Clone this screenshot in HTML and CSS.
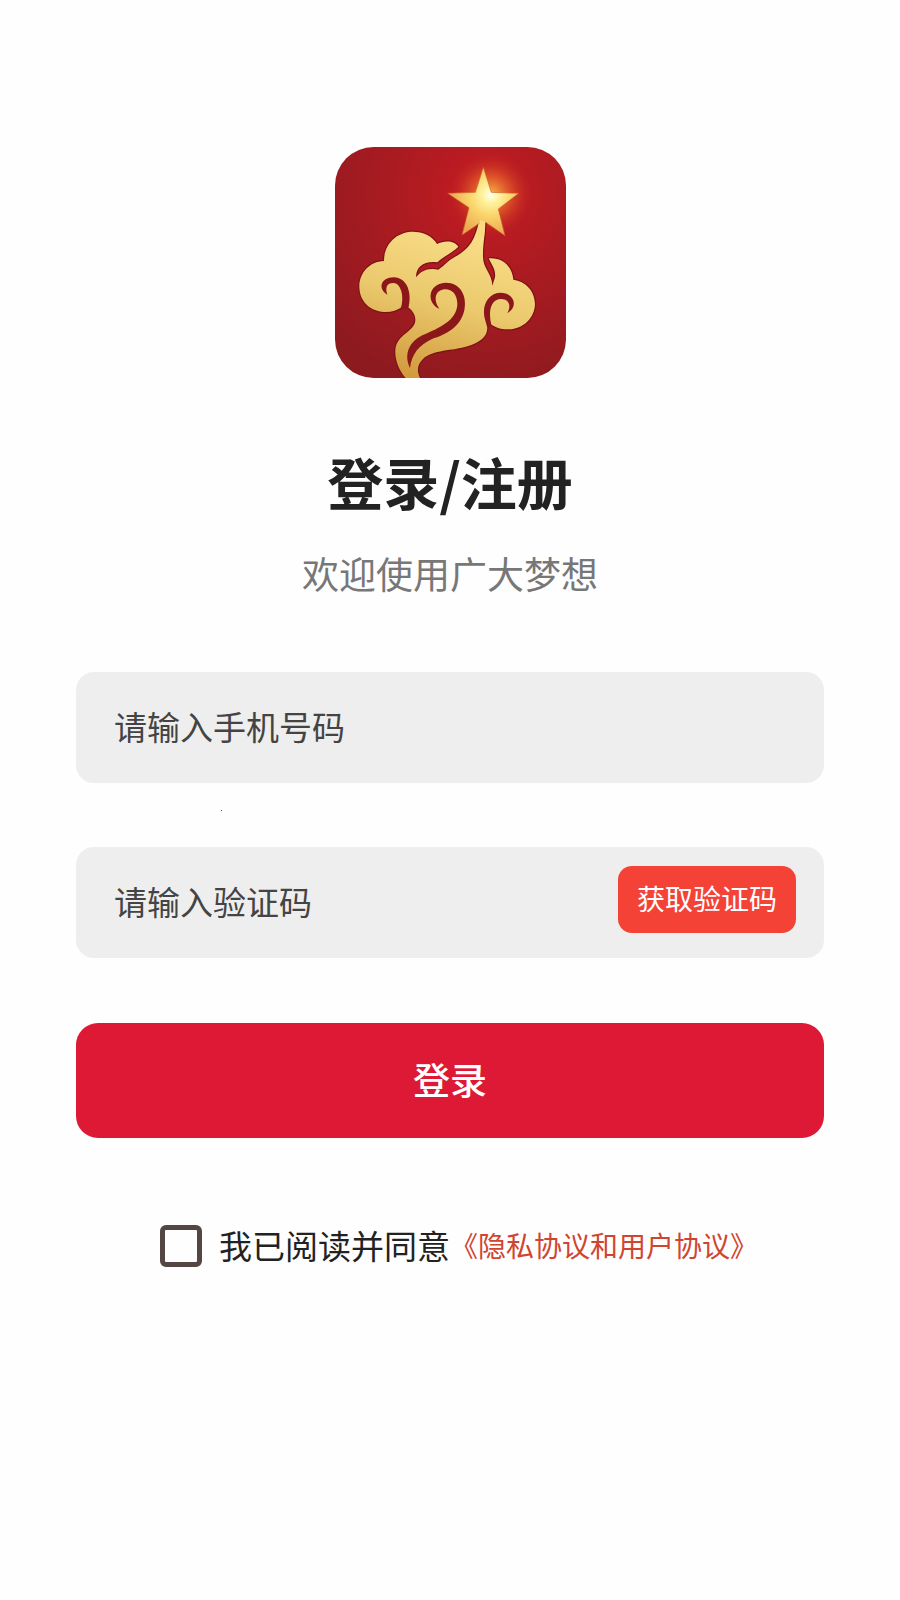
FILE: index.html
```html
<!DOCTYPE html>
<html lang="zh-CN">
<head>
    <meta charset="UTF-8">
    <meta name="viewport" content="width=device-width, initial-scale=1.0">
    <title>登录/注册</title>
    <link rel="stylesheet" href="styles.css">
</head>
<body>
    <main class="login">
        <svg class="logo" viewBox="27 29 693 693" role="img" aria-label="广大梦想">
            <defs>
                <radialGradient id="bg" cx="0.65" cy="0.2" r="0.9">
                    <stop offset="0" stop-color="#c41c22"/>
                    <stop offset="0.45" stop-color="#aa1b21"/>
                    <stop offset="1" stop-color="#8c1a1f"/>
                </radialGradient>
                <linearGradient id="gold" x1="0.6" y1="0" x2="0.3" y2="1">
                    <stop offset="0" stop-color="#fbe08c"/>
                    <stop offset="0.5" stop-color="#ebc96d"/>
                    <stop offset="1" stop-color="#d0993c"/>
                </linearGradient>
                <radialGradient id="star" gradientUnits="userSpaceOnUse" cx="494" cy="172" r="125">
                    <stop offset="0" stop-color="#fffff0"/>
                    <stop offset="0.2" stop-color="#fff3a0"/>
                    <stop offset="0.5" stop-color="#fbd56c"/>
                    <stop offset="1" stop-color="#eba750"/>
                </radialGradient>
                <radialGradient id="glow">
                    <stop offset="0" stop-color="#ffc64c" stop-opacity="0.95"/>
                    <stop offset="0.45" stop-color="#f27a2c" stop-opacity="0.55"/>
                    <stop offset="1" stop-color="#c8201f" stop-opacity="0"/>
                </radialGradient>
                <clipPath id="tile">
                    <rect x="27" y="29" width="693" height="693" rx="116"/>
                </clipPath>
            </defs>
            <g clip-path="url(#tile)">
                <rect x="27" y="29" width="693" height="693" fill="url(#bg)"/>
                <circle cx="494" cy="172" r="128" fill="url(#glow)"/>
                <!-- cloud -->
                <path fill="url(#gold)" stroke="#7d1216" stroke-width="7" paint-order="stroke" stroke-linejoin="round" d="M459 252
                    C448 306 431 334 390 357 C365 370 356 385 337 397 C305 391 286 400 270 420
                    C270 386 296 370 334 375 C352 358 377 347 397 328 C386 309 355 308 333 320
                    C320 296 290 282 255 283 C208 287 174 322 174 371 C130 372 99 408 100 450
                    C101 492 132 522 174 524 C195 525 214 519 228 509 L248 511 C260 520 269 533 268 550
                    C265 584 212 590 208 637 C206 672 222 704 244 728 L285 728
                    C270 700 274 682 291 665 C320 637 380 641 425 627 C462 615 484 600 484 570
                    L490 557 C505 570 526 577 548 576 C592 575 626 542 627 500
                    C626 459 598 432 562 427 C558 386 530 360 488 363
                    C496 382 510 395 507 420 L499 445 C498 405 468 395 471 350 C471 315 478 290 478 252Z"/>
                <!-- curls -->
                <g fill="#8c171a">
                    <path d="M184 472 C155 456 163 420 203 420 C244 421 259 467 247 513 L222 519 C236 489 229 438 202 437 C182 437 177 451 184 472Z"/>
                    <path d="M340 514 C302 499 303 440 358 436 C403 435 424 475 415 519 C403 571 359 592 318 605 C279 623 257 651 252 692 C231 649 253 611 289 594 C340 572 393 549 394 500 C394 470 377 454 354 456 C325 461 323 490 340 514Z"/>
                    <path d="M544 527 C578 509 566 466 522 466 C486 468 467 504 476 543 L484 571 L496 562 C487 527 492 488 523 485 C549 484 557 505 544 527Z"/>
                </g>
                <path fill="url(#star)" stroke="#c96128" stroke-width="2" d="M472 90 L496 165 L578 168 L517 215 L537 295 L472 250 L408 293 L429 211 L365 168 L448 165Z"/>
                <path fill="#f9da83" d="M462 248 L478 250 L474 300 L452 300Z"/>
            </g>
        </svg>

        <h1>登录/注册</h1>
        <p class="welcome">欢迎使用广大梦想</p>

        <form>
            <div class="field">
                <input type="tel" aria-label="手机号码" placeholder="请输入手机号码">
            </div>
            <div class="hint"><span class="dot"></span></div>
            <div class="field">
                <input type="text" aria-label="验证码" placeholder="请输入验证码">
                <button type="button" class="code-btn">获取验证码</button>
            </div>
            <button type="submit" class="login-btn">登录</button>
            <div class="agree">
                <input type="checkbox" id="agree">
                <label for="agree">我已阅读并同意</label>
                <a href="#">《隐私协议和用户协议》</a>
            </div>
        </form>
    </main>
</body>
</html>
```

FILE: styles.css
```css
* {
    box-sizing: border-box;
}
body {
    margin: 0;
    background-color: #fefefe;
    color: #222;
    font-family: "Noto Sans CJK SC", sans-serif;
}
button,
input {
    font-family: inherit;
    border: none;
}
.login {
    display: flex;
    flex-direction: column;
    align-items: center;
    padding: 147px 76px 40px;
}
.logo {
    width: 231px;
    height: 231px;
}
h1 {
    margin: 63px 0 0;
    font-size: 56px;
    line-height: 80px;
    font-weight: 700;
}
.welcome {
    margin: 24px 0 0;
    font-size: 37px;
    line-height: 56px;
    color: #777;
}
form {
    width: 100%;
    margin-top: 71px;
}
.field {
    display: flex;
    align-items: flex-start;
    height: 111px;
    padding: 0 28px 0 38px;
    background-color: #eee;
    border-radius: 18px;
}
.field input {
    flex: 1;
    min-width: 0;
    height: 100%;
    padding: 0 0 4px;
    background: none;
    font-size: 33px;
    color: #222;
    outline: none;
}
.field input::placeholder {
    color: #444;
    opacity: 1;
}
.hint {
    height: 64px;
    padding: 27px 0 0 145px;
}
.dot {
    display: block;
    width: 1px;
    height: 1px;
    background-color: #555;
}
.code-btn {
    height: 67px;
    margin-top: 19px;
    padding: 0 19px 4px;
    background-color: #f44336;
    border-radius: 14px;
    font-size: 28px;
    color: #fff;
    cursor: pointer;
}
.login-btn {
    display: block;
    width: 100%;
    height: 115px;
    margin-top: 65px;
    padding: 0 0 4px;
    background-color: #de1935;
    border-radius: 22px;
    font-size: 37px;
    font-weight: 500;
    color: #fff;
    cursor: pointer;
}
.agree {
    display: flex;
    justify-content: center;
    align-items: center;
    margin-top: 83px;
    padding-left: 18px;
    font-size: 33px;
    line-height: 48px;
}
.agree input {
    appearance: none;
    width: 42px;
    height: 42px;
    margin: 0 17px 0 0;
    border: 5px solid #544642;
    border-radius: 6px;
}
.agree input:checked {
    background-color: #de1935;
}
.agree label,
.agree a {
    padding-bottom: 2px;
}
.agree a {
    font-size: 28px;
    color: #d04530;
    text-decoration: none;
}
```
